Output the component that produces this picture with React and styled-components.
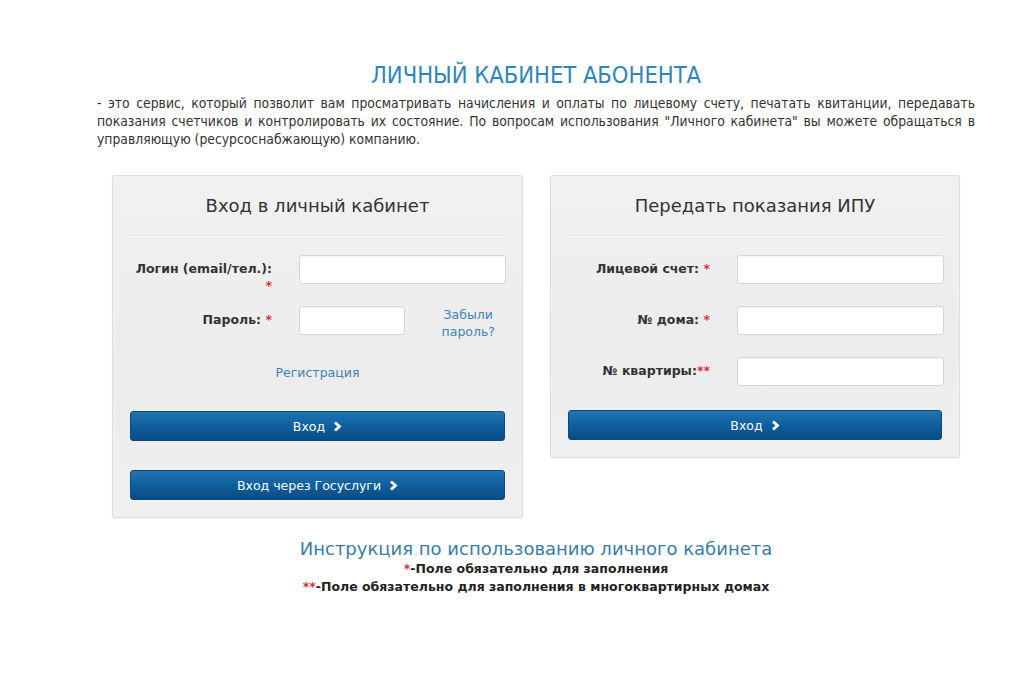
import React from "react";
import styled, { createGlobalStyle } from "styled-components";

const GlobalStyle = createGlobalStyle`
	html, body {
		margin: 0;
		padding: 0;
		background: #ffffff;
	}
	body {
		font-family: "DejaVu Sans", Verdana, sans-serif;
		color: #333333;
	}
`;

const Chevron = () => (
	<svg width="9" height="11" viewBox="0 0 9 11">
		<path d="M2 1.5 L6.5 5.5 L2 9.5" fill="none" stroke="#ffffff" strokeWidth="2.8" strokeLinejoin="miter" />
	</svg>
);

const App = () => {
	return (
		<Page>
			<GlobalStyle />
			<Title>ЛИЧНЫЙ КАБИНЕТ АБОНЕНТА</Title>
			<Intro>
				- это сервис, который позволит вам просматривать начисления и оплаты по лицевому счету, печатать
				квитанции, передавать показания счетчиков и контролировать их состояние. По вопросам использования
				"Личного кабинета" вы можете обращаться в управляющую (ресурсоснабжающую) компанию.
			</Intro>

			<Cards>
				<Card>
					<CardTitle>Вход в личный кабинет</CardTitle>
					<Divider />
					<Row>
						<Label>
							Логин (email/тел.):
							<br />
							<Star>*</Star>
						</Label>
						<Input />
					</Row>
					<Row>
						<Label>
							Пароль: <Star>*</Star>
						</Label>
						<Field>
							<Input small />
							<Forgot href="#">
								Забыли
								<br />
								пароль?
							</Forgot>
						</Field>
					</Row>
					<Register href="#">Регистрация</Register>
					<Button>
						Вход <Chevron />
					</Button>
					<Button offset="29px">
						Вход через Госуслуги <Chevron />
					</Button>
				</Card>

				<Card>
					<CardTitle>Передать показания ИПУ</CardTitle>
					<Divider />
					<Row>
						<Label>
							Лицевой счет: <Star>*</Star>
						</Label>
						<Input />
					</Row>
					<Row>
						<Label>
							№ дома: <Star>*</Star>
						</Label>
						<Input />
					</Row>
					<Row>
						<Label>
							№ квартиры:<Star>**</Star>
						</Label>
						<Input />
					</Row>
					<Button offset="25px">
						Вход <Chevron />
					</Button>
				</Card>
			</Cards>

			<Footer>
				<Instruction href="#">Инструкция по использованию личного кабинета</Instruction>
				<Note>
					<Star>*</Star>-Поле обязательно для заполнения
				</Note>
				<Note>
					<Star>**</Star>-Поле обязательно для заполнения в многоквартирных домах
				</Note>
			</Footer>
		</Page>
	);
};

export default App;

const Page = styled.div`
	width: 1024px;
	height: 677px;
	box-sizing: border-box;
	padding: 62px 49px 0 97px;
	background: #ffffff;
	overflow: hidden;
`;

const Title = styled.h1`
	margin: 0;
	text-align: center;
	font-family: "DejaVu Sans Condensed", "DejaVu Sans", sans-serif;
	font-stretch: condensed;
	font-weight: 400;
	font-size: 23.5px;
	line-height: 26px;
	color: #2f86b9;
`;

const Intro = styled.p`
	margin: 6px 0 0;
	text-align: justify;
	font-family: "DejaVu Sans Condensed", "DejaVu Sans", sans-serif;
	font-stretch: condensed;
	font-size: 13.8px;
	line-height: 18px;
	color: #333333;
`;

const Cards = styled.div`
	display: grid;
	grid-template-columns: 411px 410px;
	column-gap: 27px;
	align-items: start;
	width: 848px;
	margin: 27px auto 0;
`;

const Card = styled.div`
	box-sizing: border-box;
	padding: 18px 17px 17px;
	background: linear-gradient(#f1f1f1, #ececec 60%, #f0f0f0);
	border: 1px solid #dedede;
	border-radius: 3px;
	box-shadow: 0 1px 2px rgba(0, 0, 0, 0.06);
`;

const CardTitle = styled.h2`
	margin: 0;
	text-align: center;
	font-weight: 400;
	font-size: 18px;
	line-height: 24px;
	color: #333333;
`;

const Divider = styled.hr`
	margin: 17px 0 18px;
	border: none;
	border-top: 1px solid #e2e2e2;
	border-bottom: 1px solid #f8f8f8;
`;

const Row = styled.div`
	display: grid;
	grid-template-columns: 142px 207px;
	column-gap: 27px;
	height: 28px;
	margin-bottom: 23px;
`;

const Label = styled.label`
	padding-top: 5px;
	text-align: right;
	font-weight: 700;
	font-size: 12.5px;
	line-height: 17px;
	color: #333333;
	white-space: nowrap;
`;

const Star = styled.span`
	color: #d8313c;
	font-weight: 700;
`;

const Field = styled.div`
	display: flex;
	align-items: flex-start;
`;

const Input = styled.input`
	box-sizing: border-box;
	width: ${(props) => (props.small ? "106px" : "207px")};
	height: 29px;
	padding: 0 6px;
	background: #ffffff;
	border: 1px solid #d6d6d6;
	border-radius: 3px;
	box-shadow: inset 0 1px 1px rgba(0, 0, 0, 0.05);
	outline: none;
`;

const Forgot = styled.a`
	margin: 0 11px 0 auto;
	text-align: center;
	font-size: 12.5px;
	line-height: 17px;
	color: #3d84b6;
	text-decoration: none;
`;

const Register = styled.a`
	display: block;
	margin: 30px 0 30px;
	text-align: center;
	font-size: 12.5px;
	line-height: 17px;
	color: #3d84b6;
	text-decoration: none;
`;

const Button = styled.button`
	display: flex;
	align-items: center;
	justify-content: center;
	gap: 8px;
	width: 100%;
	height: 30px;
	margin-top: ${(props) => props.offset || "0"};
	padding: 0;
	background: linear-gradient(#2075b2, #0f5f9e 50%, #0a4c83);
	border: 1px solid #0b4a7e;
	border-radius: 3px;
	color: #ffffff;
	font-family: "DejaVu Sans", Verdana, sans-serif;
	font-size: 12.5px;
	cursor: pointer;
`;

const Footer = styled.div`
	margin-top: 20px;
	text-align: center;
`;

const Instruction = styled.a`
	display: block;
	font-size: 18px;
	line-height: 22px;
	color: #3a7ca8;
	text-decoration: none;
`;

const Note = styled.div`
	font-weight: 700;
	font-size: 12.5px;
	line-height: 18px;
	color: #222222;
`;
